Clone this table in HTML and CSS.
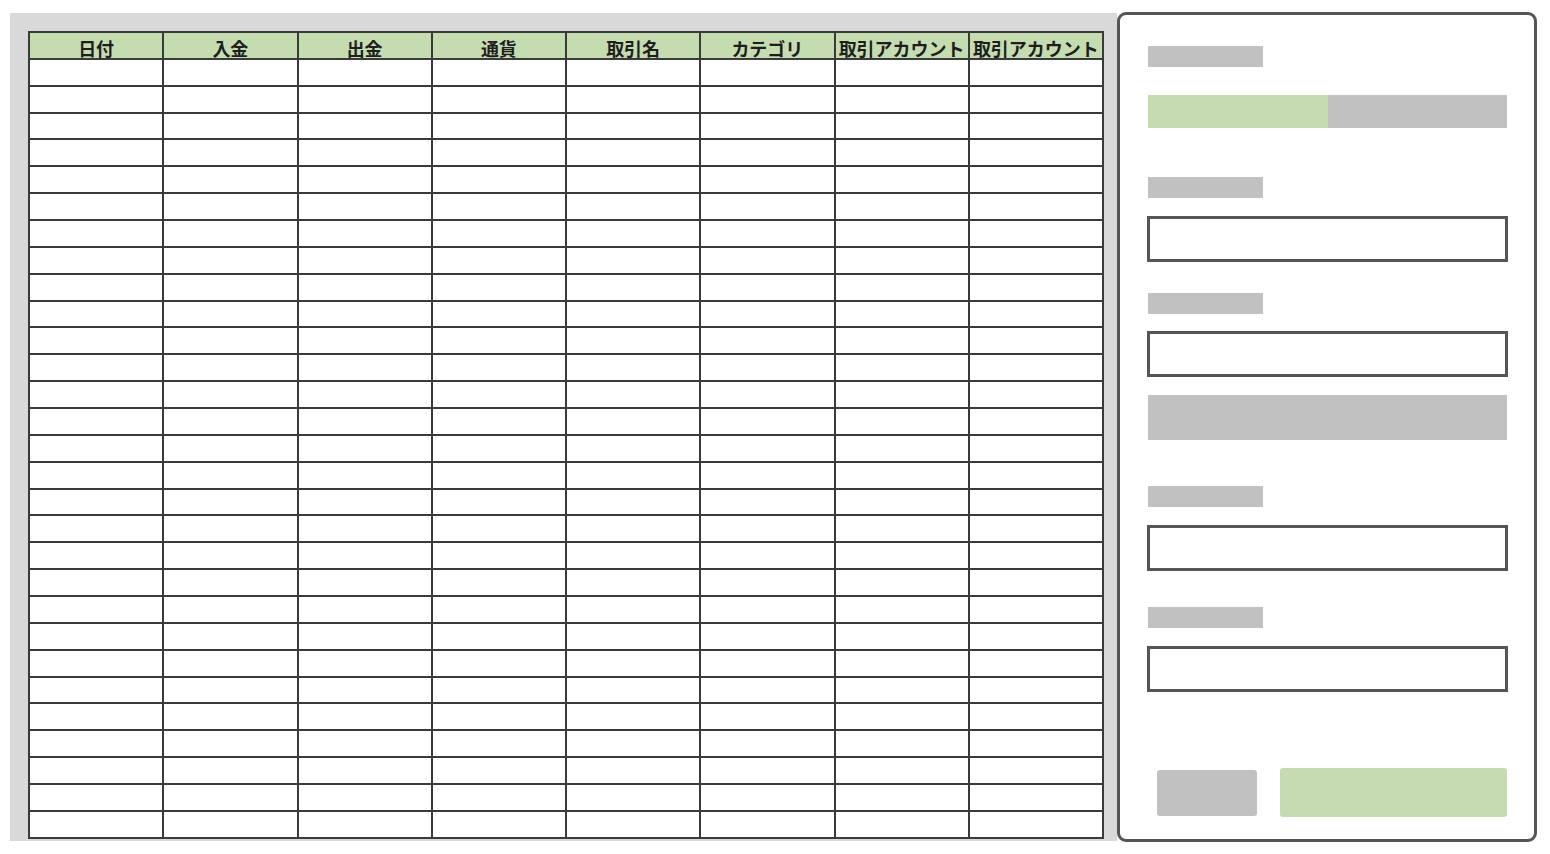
FILE: index.html
```html
<!DOCTYPE html>
<html lang="ja">
<head>
<meta charset="utf-8">
<title>取引</title>
<link rel="stylesheet" href="styles.css">
</head>
<body>
<div class="page">
  <div class="sheet">
    <table class="grid">
      <thead>
        <tr>
          <th><span class="head">日付</span></th>
          <th><span class="head">入金</span></th>
          <th><span class="head">出金</span></th>
          <th><span class="head">通貨</span></th>
          <th><span class="head">取引名</span></th>
          <th><span class="head">カテゴリ</span></th>
          <th><span class="head">取引アカウント</span></th>
          <th><span class="head">取引アカウント</span></th>
        </tr>
      </thead>
      <tbody>
        <tr><td></td><td></td><td></td><td></td><td></td><td></td><td></td><td></td></tr>
        <tr><td></td><td></td><td></td><td></td><td></td><td></td><td></td><td></td></tr>
        <tr><td></td><td></td><td></td><td></td><td></td><td></td><td></td><td></td></tr>
        <tr><td></td><td></td><td></td><td></td><td></td><td></td><td></td><td></td></tr>
        <tr><td></td><td></td><td></td><td></td><td></td><td></td><td></td><td></td></tr>
        <tr><td></td><td></td><td></td><td></td><td></td><td></td><td></td><td></td></tr>
        <tr><td></td><td></td><td></td><td></td><td></td><td></td><td></td><td></td></tr>
        <tr><td></td><td></td><td></td><td></td><td></td><td></td><td></td><td></td></tr>
        <tr><td></td><td></td><td></td><td></td><td></td><td></td><td></td><td></td></tr>
        <tr><td></td><td></td><td></td><td></td><td></td><td></td><td></td><td></td></tr>
        <tr><td></td><td></td><td></td><td></td><td></td><td></td><td></td><td></td></tr>
        <tr><td></td><td></td><td></td><td></td><td></td><td></td><td></td><td></td></tr>
        <tr><td></td><td></td><td></td><td></td><td></td><td></td><td></td><td></td></tr>
        <tr><td></td><td></td><td></td><td></td><td></td><td></td><td></td><td></td></tr>
        <tr><td></td><td></td><td></td><td></td><td></td><td></td><td></td><td></td></tr>
        <tr><td></td><td></td><td></td><td></td><td></td><td></td><td></td><td></td></tr>
        <tr><td></td><td></td><td></td><td></td><td></td><td></td><td></td><td></td></tr>
        <tr><td></td><td></td><td></td><td></td><td></td><td></td><td></td><td></td></tr>
        <tr><td></td><td></td><td></td><td></td><td></td><td></td><td></td><td></td></tr>
        <tr><td></td><td></td><td></td><td></td><td></td><td></td><td></td><td></td></tr>
        <tr><td></td><td></td><td></td><td></td><td></td><td></td><td></td><td></td></tr>
        <tr><td></td><td></td><td></td><td></td><td></td><td></td><td></td><td></td></tr>
        <tr><td></td><td></td><td></td><td></td><td></td><td></td><td></td><td></td></tr>
        <tr><td></td><td></td><td></td><td></td><td></td><td></td><td></td><td></td></tr>
        <tr><td></td><td></td><td></td><td></td><td></td><td></td><td></td><td></td></tr>
        <tr><td></td><td></td><td></td><td></td><td></td><td></td><td></td><td></td></tr>
        <tr><td></td><td></td><td></td><td></td><td></td><td></td><td></td><td></td></tr>
        <tr><td></td><td></td><td></td><td></td><td></td><td></td><td></td><td></td></tr>
        <tr><td></td><td></td><td></td><td></td><td></td><td></td><td></td><td></td></tr>
      </tbody>
    </table>
  </div>
  <div class="panel">
    <div class="label"></div>
    <div class="progress"><div class="progress-fill"></div></div>
    <div class="label label-gap1"></div>
    <div class="input"></div>
    <div class="label label-gap2"></div>
    <div class="input input-tight"></div>
    <div class="block"></div>
    <div class="label label-gap3"></div>
    <div class="input"></div>
    <div class="label label-gap4"></div>
    <div class="input"></div>
    <div class="actions">
      <div class="btn btn-cancel"></div>
      <div class="btn btn-ok"></div>
    </div>
  </div>
</div>
</body>
</html>
```

FILE: styles.css
```css
* { box-sizing: border-box; }
html, body { margin: 0; padding: 0; background: #ffffff; }
body {
  font-family: "Noto Sans CJK JP", "Noto Sans", sans-serif;
  width: 1550px;
  height: 854px;
  overflow: hidden;
}
.page {
  display: flex;
  align-items: flex-start;
  padding-left: 10px;
}
.sheet {
  margin-top: 13px;
  width: 1107px;
  height: 828px;
  background: #d9d9d9;
  padding: 18px 0 0 18px;
}
.grid {
  border-collapse: collapse;
  table-layout: fixed;
  width: 1076px;
  height: 806px;
  background: #ffffff;
}
.grid th, .grid td {
  border: 2px solid #3a3a3a;
  padding: 0;
  height: 26.87px;
}
.grid th {
  background: #c5dcb0;
  color: #1e1e1e;
  font-weight: bold;
  font-size: 18px;
  line-height: 18px;
  text-align: center;
  vertical-align: top;
  white-space: nowrap;
}
.head {
  display: block;
  padding-top: 6px;
}
.panel {
  margin-top: 12px;
  width: 420px;
  height: 830px;
  border: 3px solid #555555;
  border-radius: 9px;
  background: #ffffff;
  padding: 31px 27px 0 28px;
  display: flex;
  flex-direction: column;
}
.label {
  width: 115px;
  height: 21px;
  background: #c0c1c0;
  flex: none;
}
.progress {
  margin-top: 28px;
  width: 359px;
  height: 33px;
  background: #c0c1c0;
  display: flex;
  flex: none;
}
.progress-fill {
  width: 180px;
  background: #c5dcb0;
}
.label-gap1 { margin-top: 49px; }
.label-gap2 { margin-top: 31px; }
.label-gap3 { margin-top: 46px; }
.label-gap4 { margin-top: 36px; }
.input {
  margin-top: 18px;
  margin-left: -1px;
  width: 361px;
  height: 46px;
  border: 3px solid #555555;
  flex: none;
}
.input-tight { margin-top: 17px; }
.block {
  margin-top: 18px;
  width: 359px;
  height: 45px;
  background: #c0c1c0;
  flex: none;
}
.actions {
  margin-top: 76px;
  display: flex;
  align-items: center;
  padding-left: 9px;
  gap: 23px;
}
.btn {
  border-radius: 3px;
}
.btn-cancel {
  width: 100px;
  height: 46px;
  background: #c0c1c0;
}
.btn-ok {
  width: 228px;
  height: 49px;
  background: #c5dcb0;
}
```
